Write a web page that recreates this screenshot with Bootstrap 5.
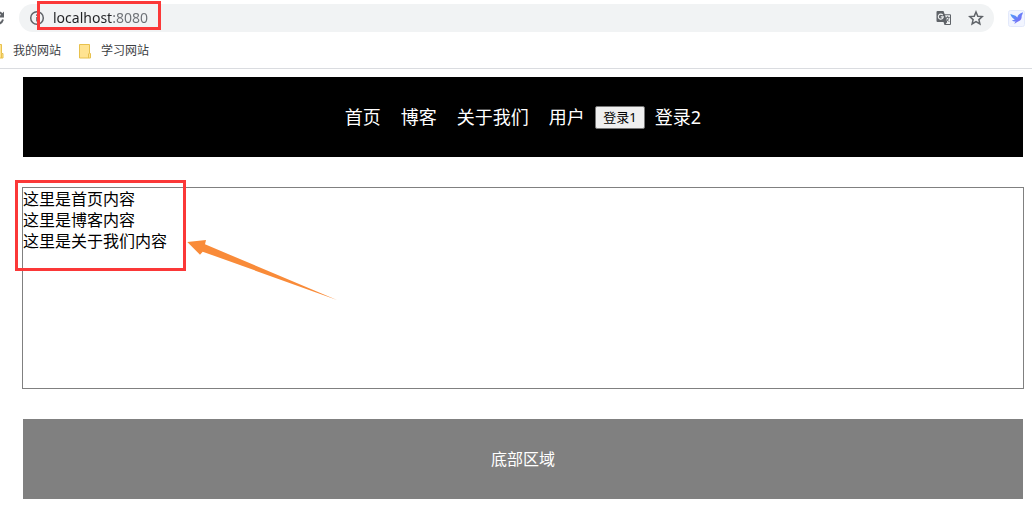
<!DOCTYPE html>
<html lang="zh-CN">
<head>
<meta charset="utf-8">
<meta name="viewport" content="width=device-width, initial-scale=1">
<title>localhost:8080</title>
<link href="https://cdn.jsdelivr.net/npm/bootstrap@5.3.0/dist/css/bootstrap.min.css" rel="stylesheet">
<style>
  body { font-family: "Noto Sans", "Noto Sans CJK SC", sans-serif; font-size: 16px; line-height: 21px; color: #000; background: #fff; }
  .browser-bar { border-bottom: 1px solid #dadce0; }
  .toolbar-row { padding: 4px 7px 0 0; gap: 14px; }
  .icon-btn { padding: 0; border: 0; background: none; line-height: 0; color: #5f6368; }
  .reload-btn { width: 5px; overflow: hidden; display: flex; justify-content: flex-end; }
  .reload-btn svg { flex: none; }
  .omnibox { height: 28px; border-radius: 14px; background: #f1f3f4; padding: 0 10px; }
  .address-input { width: 100%; height: 28px; border: 0; padding: 0 0 1px; outline: 0; font-size: 14px; line-height: 20px; color: #202124;
    background: linear-gradient(to right, #202124 60px, #6b6f74 60px); -webkit-background-clip: text; background-clip: text; -webkit-text-fill-color: transparent; }
  .bookmark-row { height: 36px; gap: 16px; padding-top: 2px; }
  .bookmark-row a { gap: 9px; font-size: 12px; line-height: 16px; color: #3c4043; text-decoration: none; }
  .folder-clip { width: 4px; overflow: hidden; display: flex; justify-content: flex-end; }
  .folder-clip svg { flex: none; }
  .page-area { padding: 8px 9px 11px 23px; gap: 30px; }
  .site-nav { min-height: 80px; background: #000; font-size: 18px; line-height: 24px; }
  .site-nav a { padding: 0 10px; color: #fff; text-decoration: none; }
  .login-btn { width: 50px; height: 23px; padding: 0; border: 1px solid #767676; border-radius: 2px; background: #efefef; color: #000; font-size: 13px; line-height: 18px; }
  .content-box { min-height: 202px; margin: 0 -1px; padding-top: 1px; border: 1px solid #808080; }
  .content-box p { margin: 0; }
  .site-footer { min-height: 80px; background: #808080; color: #fff; }
  .mark-box { border: 3px solid #fb3838; pointer-events: none; }
  .mark-url { left: -16px; top: -3px; width: 124px; height: 29px; }
  .mark-text { left: -8px; top: -8px; width: 171px; height: 91px; }
  .mark-arrow { left: 164px; top: 51px; pointer-events: none; }
</style>
</head>
<body>
<header class="browser-bar">
  <div class="toolbar-row d-flex align-items-center">
    <button class="icon-btn reload-btn" type="button" aria-label="重新加载">
      <svg width="16" height="16" viewBox="0 0 16 16" fill="none" stroke="currentColor" stroke-width="2"><path d="M13.3 4.8A6 6 0 1 0 14 9.500"/><path d="M15 1.500v6H9z" fill="currentColor" stroke="none"/></svg>
    </button>
    <div class="omnibox d-flex align-items-center flex-grow-1">
      <button class="icon-btn me-2" type="button" aria-label="网站信息">
        <svg width="16" height="16" viewBox="0 0 16 16"><circle cx="8" cy="8" r="6.300" fill="none" stroke="currentColor" stroke-width="1.500"/><path d="M7.200 7h1.600v4.500H7.200zM7.200 4.300h1.600v1.600H7.200z" fill="currentColor"/></svg>
      </button>
      <div class="position-relative flex-grow-1">
        <input class="address-input d-block" type="text" value="localhost:8080" aria-label="地址栏" spellcheck="false">
        <div class="mark-box mark-url position-absolute"></div>
      </div>
      <button class="icon-btn me-3" type="button" aria-label="翻译">
        <svg width="16" height="16" viewBox="0 0 16 16"><path d="M1.500 1h6l1.200 3.200H14a1 1 0 0 1 1 1V14a1 1 0 0 1-1 1H8.500l-1-3h-6a1 1 0 0 1-1-1V2a1 1 0 0 1 1-1z" fill="#5f6368"/><path d="M9.100 5.200H14V14H9.700l1.500-2z" fill="#f1f3f4"/><path d="M6.800 5.100A2.500 2.500 0 1 0 7.300 6.900H4.800" fill="none" stroke="#f1f3f4" stroke-width="1.100"/><path d="M9.700 7.400h4M11.600 6.200v1.200M13 7.500c-.4 1.900-1.400 3-2.500 3.900M10.400 8.200c.5 1.400 1.500 2.500 2.800 3.600" fill="none" stroke="#5f6368" stroke-width=".9"/></svg>
      </button>
      <button class="icon-btn" type="button" aria-label="收藏">
        <svg width="16" height="16" viewBox="0 0 16 16"><path d="M8 2l1.800 4.200 4.500.4-3.400 3 1 4.400L8 11.700 4.100 14l1-4.400-3.400-3 4.500-.4z" fill="none" stroke="currentColor" stroke-width="1.500"/></svg>
      </button>
    </div>
    <button class="icon-btn" type="button" aria-label="扩展程序">
      <svg width="17" height="17" viewBox="0 0 17 17"><defs><linearGradient id="bird" x1="0" y1="0" x2="1" y2="1"><stop offset="0" stop-color="#48a5fa"/><stop offset="1" stop-color="#8a5cf6"/></linearGradient></defs><rect x=".5" y=".5" width="16" height="16" rx="2" fill="#f2f5ff" stroke="#e3e9fb"/><path d="M2.300 4l5.200 1.800 1.900 1.800C9.500 5 11.500 3.800 15 2.300c-.3 1.400-.6 2.300-1.300 3.500.1 2.400-.7 4.300-2.500 5.300-1.500.9-3.200 1-4.700 3 .1-1.200.5-1.900 1.200-2.500-1.600.1-2.900-.4-3.800-1.400 1.300 0 2.200-.2 2.900-.7C4.600 8.500 3 6.500 2.300 4z" fill="url(#bird)"/></svg>
    </button>
  </div>
  <nav class="bookmark-row d-flex align-items-center" aria-label="书签栏">
    <a class="d-flex align-items-center" href="#"><span class="folder-clip"><svg width="13" height="15" viewBox="0 0 13 15"><path d="M.5.500h10v9h1.500v4.500H.5z" fill="#ffe391" stroke="#e8c14d"/><path d="M10.500 9.500v4.500" stroke="#e8c14d"/></svg></span>我的网站</a>
    <a class="d-flex align-items-center" href="#"><svg width="15" height="15" viewBox="0 0 15 15"><path d="M2.500.500h10v9h1v4.500h-11z" fill="#ffe391" stroke="#e8c14d"/><path d="M11.500 9.500v4.500" stroke="#e8c14d"/></svg>学习网站</a>
  </nav>
</header>
<div class="page-area d-flex flex-column">
  <nav class="site-nav d-flex align-items-center justify-content-center">
    <a href="#home">首页</a>
    <a href="#blog">博客</a>
    <a href="#about">关于我们</a>
    <a href="#user">用户</a>
    <button class="login-btn" type="button">登录1</button>
    <a href="#login">登录2</a>
  </nav>
  <main class="content-box position-relative">
    <p id="home">这里是首页内容</p>
    <p id="blog">这里是博客内容</p>
    <p id="about">这里是关于我们内容</p>
    <div class="mark-box mark-text position-absolute"></div>
    <svg class="mark-arrow position-absolute" width="152" height="64" viewBox="0 0 152 64" aria-hidden="true"><path d="M.3 3L19 1l-1 4.300L150 61 15.700 12.700 13 15.700z" fill="#f98b39"/></svg>
  </main>
  <footer class="site-footer d-flex align-items-center justify-content-center">底部区域</footer>
</div>
<script src="https://cdn.jsdelivr.net/npm/bootstrap@5.3.0/dist/js/bootstrap.bundle.min.js"></script>
</body>
</html>
